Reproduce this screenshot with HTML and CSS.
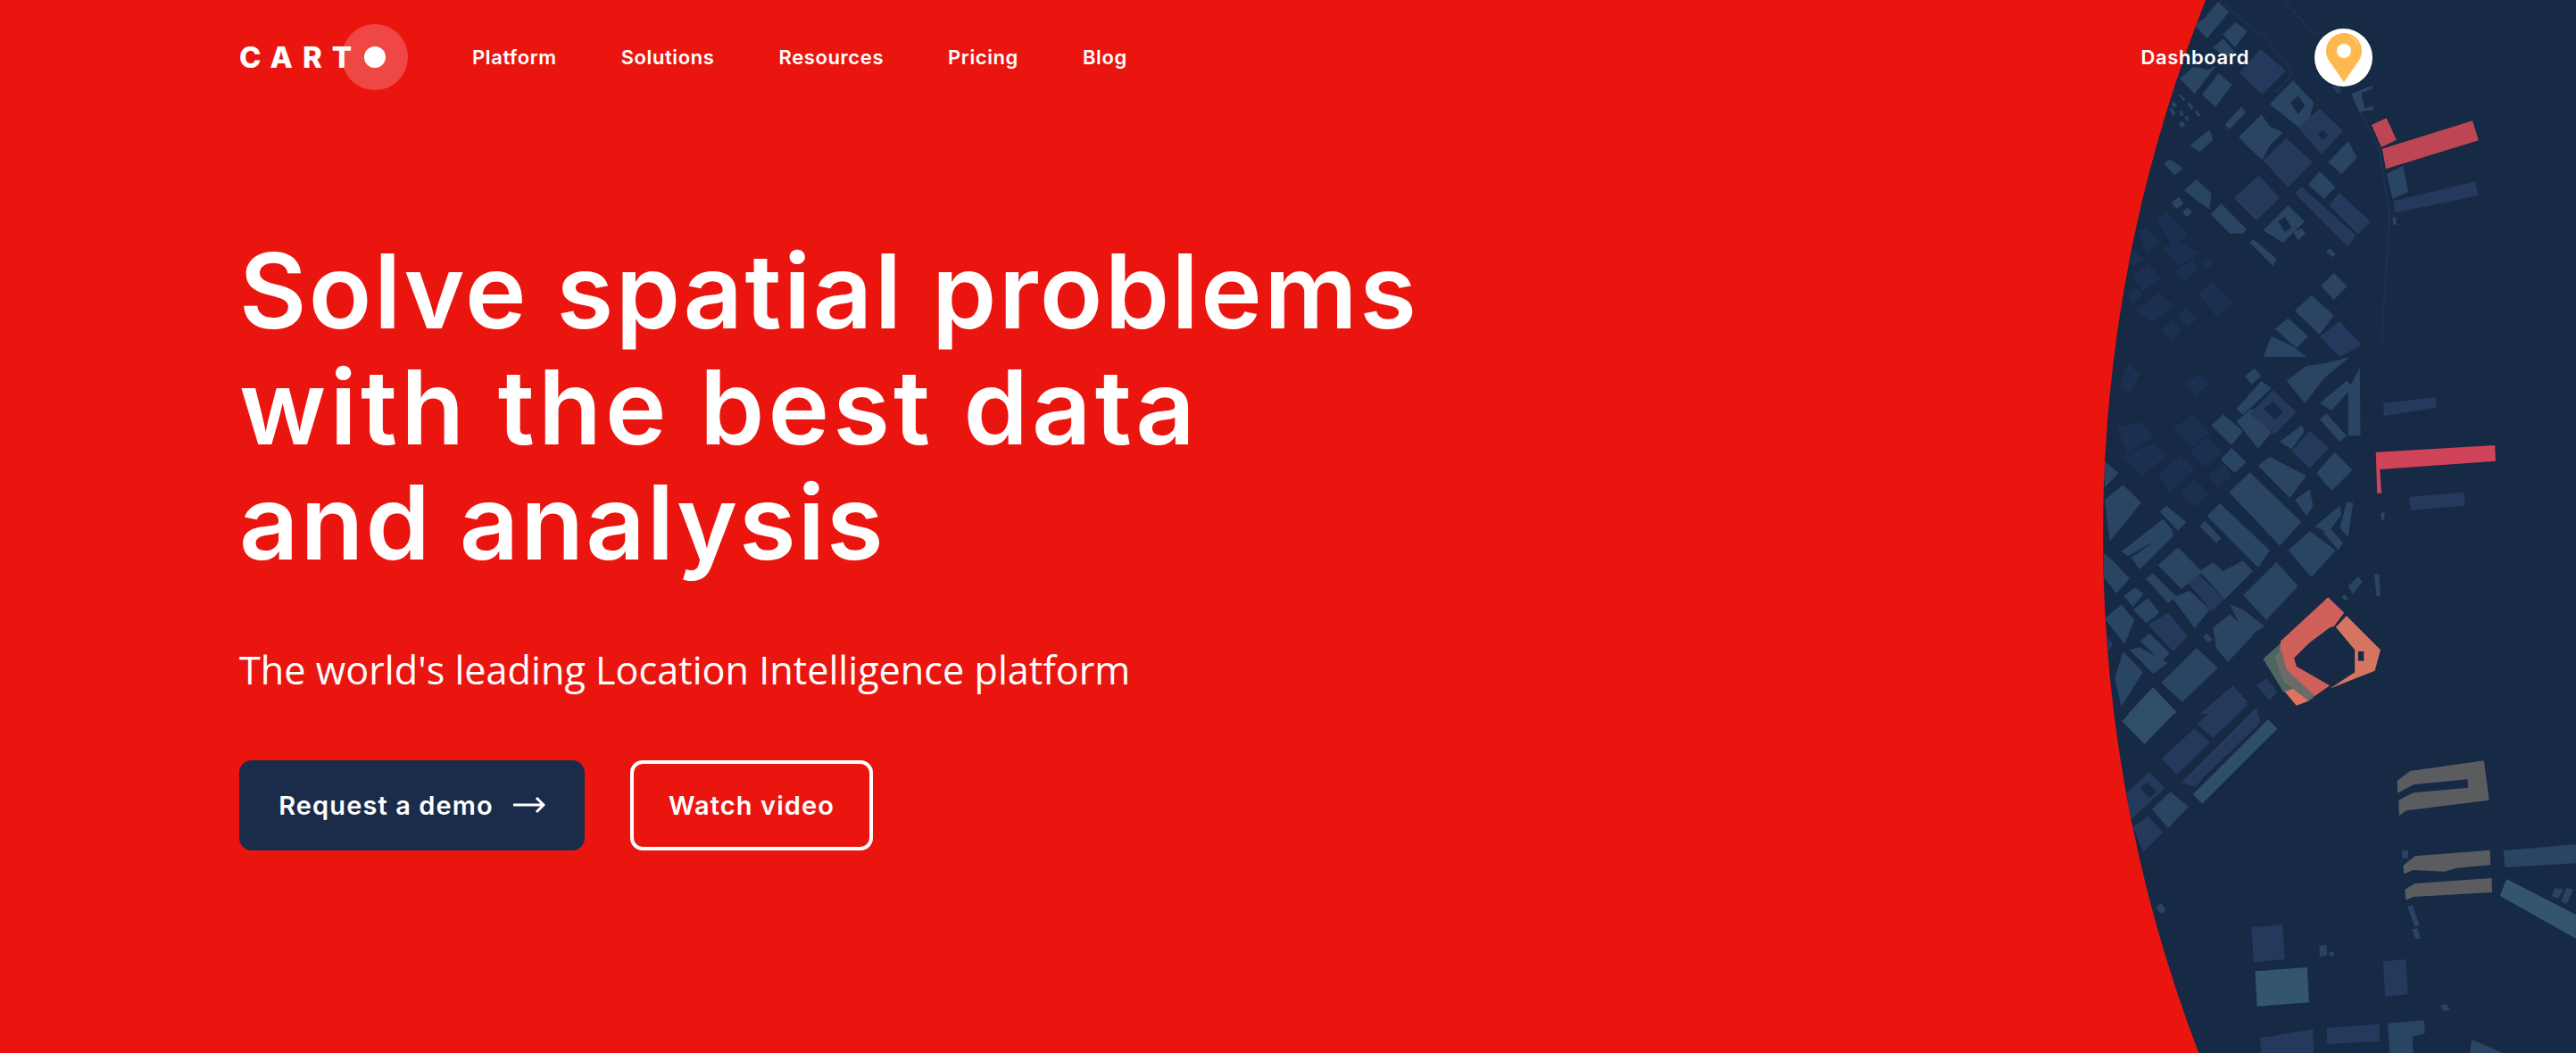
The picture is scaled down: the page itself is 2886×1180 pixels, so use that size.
FILE: index.html
```html
<!DOCTYPE html>
<html lang="en">
<head>
<meta charset="utf-8">
<title>CARTO</title>
<link rel="stylesheet" href="styles.css">
</head>
<body>
<main class="hero">
<svg class="map" viewBox="2300 0 586 1180" width="586" height="1180" aria-hidden="true">
<defs><clipPath id="disc"><circle cx="3976" cy="600" r="1620"/></clipPath></defs>
<circle cx="3976" cy="600" r="1620" fill="#162945"/>
<g clip-path="url(#disc)">
<g transform="translate(2300 0) scale(.3737 .3333)">
<path fill="none" stroke="#1c304f" stroke-width="6" d="M500 0L590 90 632 118 720 245 670 310M690 0L790 120M900 330L975 490 1010 720 985 1150"/>
<g fill="#1b3050">
<polygon points="310,735 345,715 405,790 360,830"/>
<polygon points="255,770 285,770 320,815 280,850"/>
<polygon points="330,830 385,815 440,850 375,895"/>
<polygon points="365,910 420,870 435,905 395,945"/>
<polygon points="445,880 465,865 480,885 460,905"/>
<polygon points="240,930 285,885 325,935 270,980"/>
<polygon points="225,985 245,965 270,990 235,1020"/>
<polygon points="250,1040 320,985 365,1030 295,1085"/>
<polygon points="435,985 480,945 540,1020 490,1065"/>
<polygon points="372,1060 400,1035 430,1075 405,1100"/>
<polygon points="325,1110 360,1075 388,1110 355,1145"/>
<polygon points="225,850 245,840 270,875 235,895"/>
</g>
<g fill="#2a4464">
<polygon points="455,60 495,5 528,40 462,130 425,85"/>
<polygon points="510,115 548,75 583,105 545,160"/>
<polygon points="480,160 510,130 545,175 520,195"/>
<polygon points="380,265 420,225 465,235 490,220 425,315"/>
<polygon points="447,318 497,245 537,285 487,360"/>
<polygon points="650,350 720,270 782,345 770,395 745,435"/>
<polygon points="515,420 565,358 578,378 528,436"/>
<polygon points="557,460 625,385 650,425 690,445 650,490 628,537 590,500"/>
<polygon points="410,490 470,435 480,470 440,510"/>
<polygon points="333,550 350,535 390,565 365,590"/>
<polygon points="825,545 885,475 912,530 865,585"/>
<polygon points="393,640 430,602 475,650 470,705 450,690"/>
<polygon points="355,680 378,662 392,685 370,702"/>
<polygon points="388,712 405,698 417,715 400,730"/>
<polygon points="473,720 505,685 580,770 570,785 530,785"/>
<polygon points="765,620 800,575 848,630 812,668"/>
<polygon points="590,815 600,803 670,870 660,895"/>
<polygon points="630,775 705,690 755,745 690,815"/>
<polygon points="720,780 745,768 758,785 735,808"/>
<polygon points="818,845 830,835 848,855 838,865"/>
<polygon points="803,960 843,918 882,963 842,1008"/>
<polygon points="725,1045 775,992 842,1060 800,1125"/>
<polygon points="665,1105 705,1070 765,1130 730,1170"/>
<polygon points="630,1200 655,1130 720,1165 760,1200"/>
<polygon points="378,320 385,318 397,335 390,340"/>
<polygon points="402,350 410,345 422,362 415,368"/>
<polygon points="425,375 432,370 443,388 436,393"/>
<polygon points="355,345 365,342 372,358 362,362"/>
<polygon points="350,365 358,362 368,385 358,390"/>
<polygon points="378,375 386,372 392,388 384,392"/>
<polygon points="395,392 402,388 408,403 400,407"/>
<polygon points="378,412 392,408 396,425 382,428"/>
</g>
<g fill="#25395c">
<polygon points="558,245 622,165 698,238 628,318"/>
<polygon points="630,540 700,465 778,545 705,630"/>
<polygon points="542,665 617,590 680,665 610,742"/>
<polygon points="725,650 745,628 908,790 885,830"/>
<polygon points="827,690 858,648 952,745 915,788"/>
<polygon points="735,430 800,365 870,440 805,518"/>
<polygon points="800,1130 860,1080 925,1160 860,1200"/>
</g>
<polygon fill="#162945" points="712,345 735,322 755,355 735,385"/>
<polygon fill="#162945" points="795,450 810,438 825,455 808,470"/>
<polygon fill="#162945" points="675,745 695,728 715,765 695,780"/>
<polygon fill="#bd4655" points="955,420 1000,397 1030,470 985,495"/>
<polygon fill="#bd4655" points="987,500 1258,406 1276,472 998,568"/>
<polygon fill="#2a4464" points="1000,585 1050,558 1065,645 1018,668"/>
<polygon fill="#25395c" points="1020,676 1266,610 1276,658 1026,715"/>
<polygon fill="#2a4464" points="895,315 955,288 960,298 925,312 935,365 960,355 960,370 918,375"/>
<polygon fill="#2a4464" points="1018,730 1028,730 1030,755 1020,755"/>
<polygon fill="#25395c" points="835,290 860,285 865,310 852,315"/>
</g>
<g transform="translate(2300 400) scale(.3737 .3333)">
<g fill="#1b3050">
<polygon points="225,20 260,60 230,125 200,90"/>
<polygon points="395,85 440,60 470,90 425,130"/>
<polygon points="190,235 265,220 305,265 225,325"/>
<polygon points="360,240 420,195 470,255 415,305"/>
<polygon points="205,335 300,290 345,330 265,400"/>
<polygon points="410,320 465,265 510,320 455,370"/>
<polygon points="315,395 380,330 425,380 350,455"/>
<polygon points="465,395 510,360 540,400 495,440"/>
<polygon points="380,455 425,410 470,460 425,505"/>
</g>
<g fill="#2a4464">
<polygon points="575,65 605,38 625,65 595,92"/>
<polygon points="550,175 625,80 655,105 570,195"/>
<polygon points="475,230 510,193 570,250 535,297"/>
<polygon points="550,215 595,175 655,255 615,308"/>
<polygon points="503,345 535,305 580,355 545,390"/>
<polygon points="680,285 745,230 755,250 715,310"/>
<polygon points="800,155 880,80 900,100 835,180"/>
<polygon points="800,210 820,190 880,265 860,285"/>
<polygon points="885,110 920,35 922,265 885,265"/>
<polygon points="615,365 650,335 760,400 710,475"/>
<polygon points="528,455 590,388 745,555 680,635"/>
<polygon points="440,570 455,550 505,610 490,625"/>
<polygon points="462,535 500,492 650,650 615,708"/>
<polygon points="790,390 845,320 898,380 835,450"/>
<polygon points="725,480 770,445 780,500 760,535"/>
<polygon points="785,570 860,500 865,530 825,590"/>
<polygon points="860,575 880,490 900,490 885,605"/>
<polygon points="810,590 830,575 870,625 855,650"/>
<polygon points="570,800 670,690 735,770 640,885"/>
<polygon points="440,720 480,690 510,720 570,685 600,720 515,815"/>
<polygon points="358,810 410,785 470,850 425,912"/>
<polygon points="315,700 375,640 450,725 385,780"/>
<polygon points="278,745 300,728 370,805 345,828"/>
<polygon points="235,675 355,580 362,600 260,715"/>
<polygon points="155,480 210,430 265,490 170,620"/>
<polygon points="205,655 330,545 360,585 225,670"/>
<polygon points="320,520 340,500 400,555 375,585"/>
<polygon points="152,660 175,680 230,745 190,795 152,740"/>
<polygon points="155,350 197,390 155,440"/>
<polygon points="212,805 245,775 272,795 240,840"/>
<polygon points="240,850 285,810 320,860 280,895"/>
<polygon points="155,880 205,832 245,885 215,965"/>
<polygon points="262,955 290,930 350,995 325,1025"/>
<polygon points="530,830 570,850 635,905 580,945"/>
<polygon points="480,910 530,865 600,935 525,1025 490,980"/>
<polygon points="450,940 462,930 478,950 465,960"/>
<polygon points="325,1095 430,978 495,1045 388,1160"/>
<polygon points="185,1080 210,990 270,1060 205,1175"/>
<polygon points="230,985 260,975 345,1030 300,1065"/>
<polygon points="705,650 770,585 848,650 775,740"/>
<polygon points="885,770 915,738 928,755 900,798"/>
<polygon points="963,730 978,730 982,805 970,805"/>
<polygon points="865,805 875,798 885,812 875,820"/>
<polygon points="982,525 995,522 992,550 985,550"/>
</g>
<g fill="#25395c">
<polygon points="590,190 660,112 730,185 665,260"/>
<polygon points="715,315 770,250 828,305 770,375"/>
<polygon points="405,760 440,735 515,815 475,855"/>
<polygon points="285,900 345,860 405,940 360,990"/>
<polygon points="150,920 180,965 150,1020"/>
<polygon points="610,1105 640,1080 672,1125 650,1155"/>
<polygon points="440,1200 540,1105 585,1160 520,1200"/>
<polygon fill="#2a4464" points="700,80 760,30 820,20 890,0 815,70 755,155"/>
</g>
<polygon fill="#162945" points="630,175 660,150 690,185 665,210"/>
<polygon fill="#2f4f68" points="225,1200 300,1110 368,1190 368,1200"/>
<polygon fill="#25395c" points="990,155 1148,135 1148,172 992,198"/>
<polygon fill="#25395c" points="1068,470 1233,455 1235,500 1072,516"/>
<polygon fill="#d04358" points="968,320 1325,297 1327,350 980,378 985,458 972,458"/>
<polygon fill="#4c6662" points="630,1015 685,960 700,1010 780,1150 760,1155 690,1125"/>
<polygon fill="#d0605a" points="683,955 825,808 873,860 843,905 830,910 770,960 723,1012 730,1040 830,1105 785,1140 700,1075 678,1020"/>
<polygon fill="#d4765f" points="880,870 982,985 965,1055 830,1115 905,1060 905,985 848,908"/>
<polygon fill="#df7360" points="695,1125 720,1115 770,1155 730,1172"/>
<polygon fill="#6b6c68" points="685,985 700,1050 785,1140 765,1155 690,1090 665,1010"/>
<polygon fill="#162945" points="915,990 932,990 932,1022 915,1022"/>
</g>
<g transform="translate(2300 780) scale(.3737 .3333)">
<polygon fill="#2f4f68" points="207,85 280,0 370,50 275,162"/>
<polygon fill="#2f4f68" points="420,330 645,78 673,110 447,362"/>
<polygon fill="#25395c" points="385,290 610,38 622,90 450,275 430,305"/>
<polygon fill="#25395c" points="325,210 425,108 470,155 372,265"/>
<polygon fill="#25395c" points="432,95 525,0 585,30 480,140"/>
<polygon fill="#2a4464" points="297,380 352,322 407,372 345,445"/>
<polygon fill="#25395c" points="240,440 285,402 330,458 270,525"/>
<polygon fill="#25395c" points="215,330 290,255 335,310 235,415"/>
<polygon fill="#162945" points="262,310 282,290 310,322 290,342"/>
<polygon fill="#2a4464" points="308,712 325,697 338,720 325,733"/>
<polygon fill="#25395c" points="595,778 688,768 695,885 602,895"/>
<polygon fill="#33566c" points="606,925 762,912 768,1030 612,1043"/>
<polygon fill="#2a4464" points="798,840 820,836 822,872 800,876"/>
<polygon fill="#2a4464" points="828,862 842,860 842,873 828,875"/>
<polygon fill="#25395c" points="990,892 1058,885 1064,1003 996,1010"/>
<polygon fill="#25395c" points="820,1115 978,1103 980,1160 822,1170"/>
<polygon fill="#25395c" points="620,1150 780,1120 782,1200 625,1200"/>
<polygon fill="#2a4464" points="1003,1100 1113,1090 1115,1135 1078,1145 1080,1200 1010,1200"/>
<polygon fill="#5a5c60" points="1032,285 1070,252 1292,217 1308,350 1060,385 1038,402 1036,350 1080,325 1245,308 1243,280 1080,298 1033,326"/>
<polygon fill="#5a5c60" points="1050,570 1085,538 1310,518 1312,568 1210,578 1175,590 1080,585 1052,598"/>
<polygon fill="#5a5c60" points="1055,650 1085,630 1315,612 1317,660 1080,675 1058,686"/>
<polygon fill="#2a4464" points="1350,520 1568,498 1568,562 1355,576"/>
<polygon fill="#33566c" points="1360,615 1568,735 1568,815 1340,672"/>
<polygon fill="#2a4464" points="1045,520 1065,518 1065,545 1048,545"/>
<polygon fill="#2a4464" points="1062,708 1078,702 1098,770 1085,775"/>
<polygon fill="#2a4464" points="1076,785 1092,780 1102,815 1088,818"/>
<polygon fill="#2a4464" points="1505,645 1530,650 1515,680 1495,672"/>
<polygon fill="#2a4464" points="1540,645 1560,650 1540,698 1522,690"/>
<polygon fill="#2a4464" points="1162,1040 1178,1035 1190,1055 1172,1060"/>
<polygon fill="#2a4464" points="1255,1155 1350,1200 1250,1200"/>
</g>
</g>
</svg>
<header class="topbar">
<a class="logo" href="#"><span class="logo-text">CART</span><span class="logo-dot"></span></a>
<nav class="nav">
<a href="#">Platform</a>
<a href="#">Solutions</a>
<a href="#">Resources</a>
<a href="#">Pricing</a>
<a href="#">Blog</a>
</nav>
<a class="dash" href="#">Dashboard</a>
<span class="avatar">
<svg width="40" height="55" viewBox="0 0 40 55" aria-hidden="true">
<path fill="#ffb84f" d="M20 0C9 0 0 9 0 20c0 4 1.300 7.500 3 10.500L20 55l17-24.500c1.700-3 3-6.500 3-10.500C40 9 31 0 20 0z"/>
<circle cx="20" cy="20" r="8" fill="#fff"/>
<path fill="none" stroke="#ffd89c" stroke-width="1" d="M27 4c4 2 6.500 5 7.500 9"/>
</svg>
</span>
</header>
<section class="intro">
<h1><span class="line-a">Solve spatial problems</span><span class="line-b">with the best data</span><span class="line-c">and analysis</span></h1>
<p>The world's leading Location Intelligence platform</p>
<div class="actions">
<a class="btn btn-dark" href="#">Request a demo
<svg width="36" height="20" viewBox="0 0 36 20" aria-hidden="true"><path fill="none" stroke="#fff" stroke-width="3" d="M0 10h34M26 2l8 8-8 8"/></svg>
</a>
<a class="btn btn-line" href="#">Watch video</a>
</div>
</section>
</main>
</body>
</html>
```

FILE: styles.css
```css
* { box-sizing: border-box; }
html, body { margin: 0; }
body { font-family: "Inter", "Liberation Sans", sans-serif; color: #fff; background: #eb1510; }
a { color: inherit; text-decoration: none; }
.hero { position: relative; height: 1180px; overflow: hidden; background: #eb1510; padding-left: 268px; }
.map { position: absolute; top: 0; right: 0; display: block; }
.topbar { position: relative; display: flex; align-items: center; height: 128px; padding-right: 228px; }
.logo { position: relative; display: flex; align-items: center; width: 261px; height: 74px; }
.logo-text { position: relative; font-size: 33px; font-weight: 800; letter-spacing: 11px; line-height: 1; }
.logo-dot { position: absolute; left: 115px; top: 0; width: 74px; height: 74px; border-radius: 50%; background: rgba(255,255,255,.22); }
.logo-dot::after { content: ""; position: absolute; left: 25px; top: 25px; width: 24px; height: 24px; border-radius: 50%; background: #fff; }
.nav { display: flex; gap: 72px; }
.nav a, .dash { font-size: 22px; font-weight: 600; letter-spacing: .6px; }
.dash { margin-left: auto; margin-right: 73px; }
.avatar { display: flex; align-items: center; justify-content: center; width: 65px; height: 65px; border-radius: 50%; background: #fff; }
.avatar svg { display: block; }
.intro { position: relative; padding-top: 134px; }
h1 { margin: 0; font-size: 116px; line-height: 129.5px; font-weight: 600; }
h1 span { display: block; }
.line-a { letter-spacing: 2.4px; }
.line-b { letter-spacing: 4.1px; }
.line-c { letter-spacing: 1.9px; }
p { margin: 72px 0 0; font-family: "Open Sans", sans-serif; font-size: 43.2px; line-height: 56px; }
.actions { display: flex; gap: 51px; margin-top: 73px; }
.btn { display: flex; align-items: center; justify-content: center; gap: 22px; height: 101px; border-radius: 14px; font-size: 29px; font-weight: 600; letter-spacing: 1.1px; }
.btn-dark { width: 387px; background: #1a2c4a; }
.btn-line { width: 272px; border: 4px solid #fff; }
```
